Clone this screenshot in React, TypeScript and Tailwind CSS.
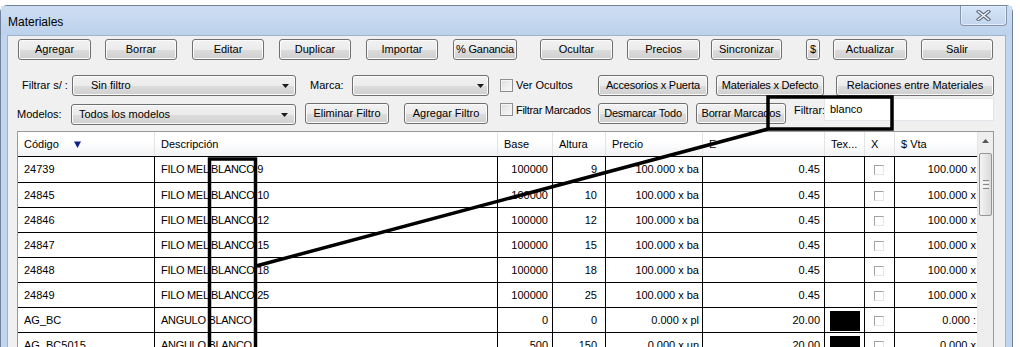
import React from 'react';

const btnBase =
  'h-[21px] shrink-0 rounded-[3px] border border-[#707070] bg-[linear-gradient(to_bottom,#f2f2f2_0%,#ebebeb_50%,#dddddd_51%,#cfcfcf_100%)] shadow-[inset_0_0_0_1px_#fbfbfb] flex items-center text-[11px] leading-none text-black';

const topButtons = [
  { label: 'Agregar', cls: 'ml-[10px] w-[73px]' },
  { label: 'Borrar', cls: 'ml-[14px] w-[72px]' },
  { label: 'Editar', cls: 'ml-[15px] w-[72px]' },
  { label: 'Duplicar', cls: 'ml-[15px] w-[72px]' },
  { label: 'Importar', cls: 'ml-[15px] w-[72px]' },
  { label: '% Ganancia', cls: 'ml-[15px] w-[64px] tracking-[-0.2px]' },
  { label: 'Ocultar', cls: 'ml-[23px] w-[73px]' },
  { label: 'Precios', cls: 'ml-[14px] w-[73px]' },
  { label: 'Sincronizar', cls: 'ml-[11px] w-[71px]' },
  { label: '$', cls: 'ml-[24px] w-[14px]' },
  { label: 'Actualizar', cls: 'ml-[13px] w-[74px]' },
  { label: 'Salir', cls: 'ml-[14px] w-[72px]' },
];

type Row = {
  cod: string;
  desc: string;
  base: string;
  alt: string;
  precio: string;
  e: string;
  tex: boolean;
  vta: string;
};

const rows: Row[] = [
  { cod: '24739', desc: 'FILO MEL BLANCO 9', base: '100000', alt: '9', precio: '100.000 x ba', e: '0.45', tex: false, vta: '100.000 x' },
  { cod: '24845', desc: 'FILO MEL BLANCO 10', base: '100000', alt: '10', precio: '100.000 x ba', e: '0.45', tex: false, vta: '100.000 x' },
  { cod: '24846', desc: 'FILO MEL BLANCO 12', base: '100000', alt: '12', precio: '100.000 x ba', e: '0.45', tex: false, vta: '100.000 x' },
  { cod: '24847', desc: 'FILO MEL BLANCO 15', base: '100000', alt: '15', precio: '100.000 x ba', e: '0.45', tex: false, vta: '100.000 x' },
  { cod: '24848', desc: 'FILO MEL BLANCO 18', base: '100000', alt: '18', precio: '100.000 x ba', e: '0.45', tex: false, vta: '100.000 x' },
  { cod: '24849', desc: 'FILO MEL BLANCO 25', base: '100000', alt: '25', precio: '100.000 x ba', e: '0.45', tex: false, vta: '100.000 x' },
  { cod: 'AG_BC', desc: 'ANGULO BLANCO', base: '0', alt: '0', precio: '0.000 x pl', e: '20.00', tex: true, vta: '0.000 :' },
  { cod: 'AG_BC5015', desc: 'ANGULO BLANCO', base: '500', alt: '150', precio: '0.000 x un', e: '20.00', tex: true, vta: '0.000 x' },
];

const headers = [
  { label: 'Código', cls: 'w-[137px]', sort: true },
  { label: 'Descripción', cls: 'w-[343px]' },
  { label: 'Base', cls: 'w-[55px]' },
  { label: 'Altura', cls: 'w-[53px] pl-[5px]' },
  { label: 'Precio', cls: 'w-[97px]' },
  { label: 'E', cls: 'w-[122px]' },
  { label: 'Tex...', cls: 'w-[40px]' },
  { label: 'X', cls: 'w-[30px]' },
  { label: '$ Vta', cls: 'w-[82px] border-r-0' },
];

function Arrow({ cls }: { cls: string }) {
  return (
    <svg className={cls} width="7" height="4" viewBox="0 0 7 4">
      <path d="M0 0h7L3.5 4z" fill="#1a1a1a" />
    </svg>
  );
}

function CheckBox() {
  return (
    <div className="size-[13px] shrink-0 border border-[#8e8f8f] bg-[linear-gradient(135deg,#dcdcdc,#fbfbfb)] shadow-[inset_0_0_0_1px_#f4f4f4]" />
  );
}

export default function App() {
  return (
    <div className="relative w-[1020px] h-[347px] overflow-hidden bg-white font-['Liberation_Sans',Arial,sans-serif] text-[11px] text-black">
      <div className="mt-[5px] w-[1013px] h-[400px] rounded-t-[7px] border border-[#71839b] bg-[#c1d5ee] px-[6px] flex flex-col">
        {/* title bar */}
        <div className="h-[29px] shrink-0 flex items-start justify-between bg-gradient-to-b from-[#cddef3] to-[#bcd1eb] -mx-[6px] px-[6px]">
          <span className="ml-[1px] mt-[9px] text-[12px] leading-[14px]">Materiales</span>
          <div className="-mr-[1px] w-[47px] h-[20px] rounded-b-[4px] border border-t-0 border-[#8596ad] bg-gradient-to-b from-[#d6e4f6] to-[#c3d6ee] shadow-[inset_0_0_0_1px_#e4eefa] flex items-center justify-center">
            <svg width="15" height="11" viewBox="0 0 15 11">
              <path d="M2.5 1.5L12.5 9.5M12.5 1.5L2.5 9.5" stroke="#5b6a7f" strokeWidth="3.6" strokeLinecap="square" />
              <path d="M2.5 1.5L12.5 9.5M12.5 1.5L2.5 9.5" stroke="#f2f5f9" strokeWidth="1.6" strokeLinecap="square" />
            </svg>
          </div>
        </div>

        {/* client area */}
        <div className="flex-1 bg-[#f0f0f0] border border-[#9fb3cc] flex flex-col">
          {/* toolbar */}
          <div className="h-[24px] shrink-0 flex items-start pt-[3px]">
            {topButtons.map((b) => (
              <div key={b.label} className={`${btnBase} justify-center ${b.cls}`}>
                {b.label}
              </div>
            ))}
          </div>

          {/* filter row 1 */}
          <div className="h-[37px] shrink-0 flex items-start">
            <div className="ml-[14px] mt-[15px] w-[50px] h-[21px] flex items-center">Filtrar s/ :</div>
            <div className={`${btnBase} mt-[15px] w-[224px]`}>
              <span className="pl-[18px]">Sin filtro</span>
              <Arrow cls="ml-auto mr-[6px]" />
            </div>
            <div className="ml-[14px] mt-[15px] w-[42px] h-[21px] flex items-center">Marca:</div>
            <div className={`${btnBase} mt-[15px] w-[137px]`}>
              <Arrow cls="ml-auto mr-[4px]" />
            </div>
            <div className="ml-[11px] mt-[15px] w-[98px] h-[21px] flex items-center">
              <CheckBox />
              <span className="ml-[3px]">Ver Ocultos</span>
            </div>
            <div className={`${btnBase} justify-center mt-[15px] w-[110px] tracking-[-0.2px]`}>Accesorios x Puerta</div>
            <div className={`${btnBase} justify-center mt-[15px] ml-[8px] w-[108px] tracking-[-0.2px]`}>Materiales x Defecto</div>
            <div className={`${btnBase} justify-center mt-[15px] ml-[12px] w-[158px]`}>Relaciones entre Materiales</div>
          </div>

          {/* filter row 2 */}
          <div className="h-[34px] shrink-0 flex items-start">
            <div className="ml-[9px] mt-[7px] w-[54px] h-[20px] flex items-center">Modelos:</div>
            <div className={`${btnBase} mt-[7px] h-[20px] w-[225px]`}>
              <span className="pl-[7px]">Todos los modelos</span>
              <Arrow cls="ml-auto mr-[7px]" />
            </div>
            <div className={`${btnBase} justify-center mt-[6px] ml-[9px] w-[84px]`}>Eliminar Filtro</div>
            <div className={`${btnBase} justify-center mt-[6px] ml-[15px] w-[84px]`}>Agregar Filtro</div>
            <div className="ml-[12px] mt-[6px] w-[98px] flex items-start">
              <CheckBox />
              <span className="ml-[3px] mt-[1px] leading-[13px] tracking-[-0.3px]">Filtrar Marcados</span>
            </div>
            <div className={`${btnBase} justify-center mt-[6px] w-[90px] tracking-[-0.2px]`}>Desmarcar Todo</div>
            <div className={`${btnBase} justify-center mt-[6px] ml-[8px] w-[90px] tracking-[-0.2px]`}>Borrar Marcados</div>
            <div className="ml-[8px] mt-[6px] w-[30px] leading-[14px]">Filtrar:</div>
            <div className="mt-[1px] w-[170px] h-[23px] bg-white border border-[#e2e5ea] px-[5px] pt-[3px] leading-[14px]">
              blanco
            </div>
          </div>

          {/* grid */}
          <div className="ml-[9px] w-[977px] h-[230px] shrink-0 border border-[#9a9a9a] bg-white flex">
            <div className="flex-1 flex flex-col">
              <div className="h-[25px] shrink-0 flex border-b border-black bg-gradient-to-b from-white from-40% to-[#f1f2f4]">
                {headers.map((h) => (
                  <div
                    key={h.label}
                    className={`${h.cls} shrink-0 h-full flex items-center pl-[6px] border-r border-[#e3e3e3]`}
                  >
                    {h.label}
                    {h.sort && (
                      <svg className="ml-[15px]" width="7" height="7" viewBox="0 0 7 7">
                        <path d="M0 0.5h7L3.5 7z" fill="#10208a" />
                      </svg>
                    )}
                  </div>
                ))}
              </div>
              {rows.map((r, i) => (
                <div
                  key={r.cod}
                  className={`${i === 0 ? 'h-[26px]' : 'h-[25px]'} shrink-0 flex border-b border-black whitespace-nowrap`}
                >
                  <div className="w-[137px] shrink-0 flex items-center pl-[6px] border-r border-black">{r.cod}</div>
                  <div className="w-[343px] shrink-0 flex items-center pl-[6px] border-r border-black tracking-[-0.3px]">
                    {r.desc}
                  </div>
                  <div className="w-[55px] shrink-0 flex items-center justify-end pr-[4px] border-r border-black">{r.base}</div>
                  <div className="w-[53px] shrink-0 flex items-center justify-end pr-[8px] border-r border-black">{r.alt}</div>
                  <div className="w-[97px] shrink-0 flex items-center justify-end pr-[3px] border-r border-black overflow-hidden">
                    {r.precio}
                  </div>
                  <div className="w-[122px] shrink-0 flex items-center justify-end pr-[4px] border-r border-black">{r.e}</div>
                  <div className="w-[40px] shrink-0 border-r border-black">
                    {r.tex && <div className="ml-[5px] mt-[3px] w-[30px] h-[20px] bg-black" />}
                  </div>
                  <div className="w-[30px] shrink-0 border-r border-black">
                    <div className="ml-[9px] mt-[8px] size-[10px] border border-t-[#a3a3a3] border-l-[#a3a3a3] border-b-[#e6e6e6] border-r-[#e6e6e6] bg-white" />
                  </div>
                  <div className="w-[82px] shrink-0 flex items-center justify-end pr-[1px] overflow-hidden">{r.vta}</div>
                </div>
              ))}
            </div>

            {/* scrollbar */}
            <div className="w-[16px] shrink-0 bg-[#eeeeee] border-l border-[#e6e6e6] flex flex-col">
              <div className="h-[17px] flex items-center justify-center">
                <svg width="7" height="4" viewBox="0 0 7 4">
                  <path d="M0 4h7L3.5 0z" fill="#555" />
                </svg>
              </div>
              <div className="mt-[4px] mx-[1px] h-[63px] rounded-[2px] border border-[#959595] bg-gradient-to-r from-[#f4f4f4] to-[#dadada] flex flex-col items-center justify-center gap-[1px]">
                <div className="w-[6px] h-[1px] bg-[#8a8a8a]" />
                <div className="w-[6px] h-[1px] bg-[#fdfdfd]" />
                <div className="w-[6px] h-[1px] bg-[#8a8a8a]" />
                <div className="w-[6px] h-[1px] bg-[#fdfdfd]" />
                <div className="w-[6px] h-[1px] bg-[#8a8a8a]" />
              </div>
            </div>
          </div>
        </div>
      </div>

      {/* annotation marks */}
      <svg className="absolute inset-0 pointer-events-none" width="1020" height="347" viewBox="0 0 1020 347">
        <rect x="768" y="97" width="124" height="32" fill="none" stroke="#000" strokeWidth="3.5" />
        <rect x="209.5" y="159" width="46" height="220" fill="none" stroke="#000" strokeWidth="3.5" />
        <line x1="768" y1="129" x2="256" y2="266" stroke="#000" strokeWidth="3.5" />
      </svg>
    </div>
  );
}
